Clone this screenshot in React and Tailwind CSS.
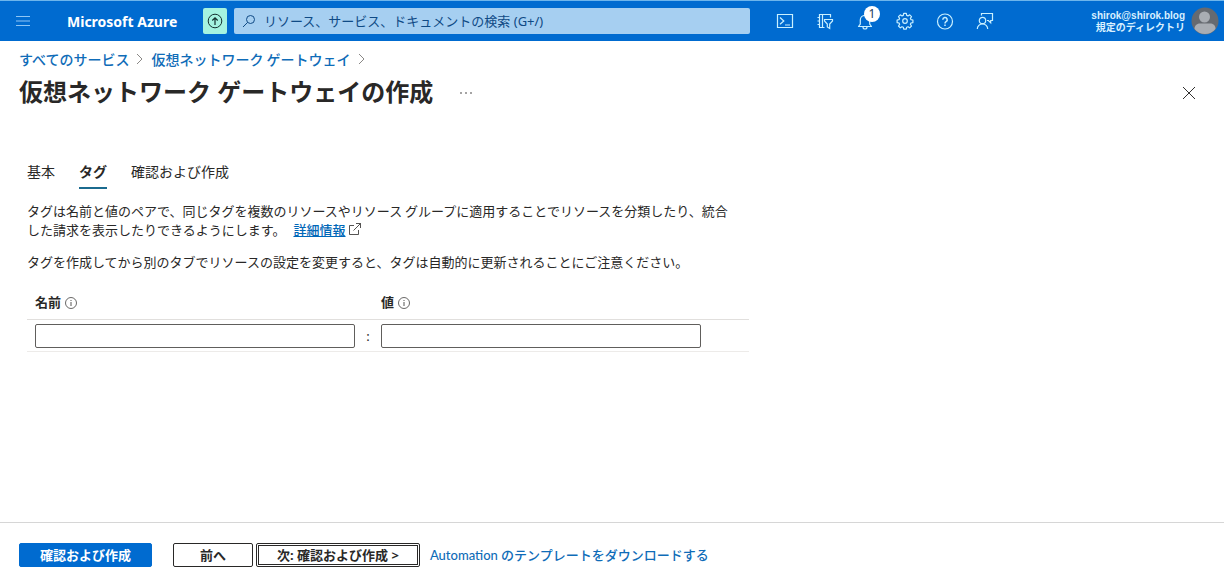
import React, { useState } from 'react';

const ICON_PROPS = {
  width: 20,
  height: 20,
  viewBox: '0 0 20 20',
  fill: 'none',
  stroke: 'currentColor',
  strokeWidth: 1.2,
  'aria-hidden': true
};

const CloudShellIcon = () => (
  <svg {...ICON_PROPS}>
    <path d="M2.5 3.5h15v13h-15z" />
    <path d="M5 6.5l3.8 3.5L5 13.2M10 14h5" />
  </svg>
);

const DirectoryIcon = () => (
  <svg {...ICON_PROPS}>
    <path d="M9.5 16.5h-5v-13h11v3M7.5 3.5v13M2.5 6.5h2M2.5 10h2M2.5 13.5h2" />
    <path d="M9.5 8.5h8V10l-2.8 3v4.5L12.3 16v-3L9.5 10z" />
  </svg>
);

const BellIcon = () => (
  <svg {...ICON_PROPS}>
    <path d="M3.5 15.5h13l-1.8-2.3V9a4.7 4.7 0 0 0-9.4 0v4.2z" strokeLinejoin="round" />
    <path d="M8 16a2 2 0 0 0 4 0" />
  </svg>
);

const GearIcon = () => (
  <svg {...ICON_PROPS}>
    <circle cx="10" cy="10" r="2.3" />
    <path
      d="M8.7 2.4h2.6l.4 2 1.3.5 1.7-1.1 1.8 1.8-1.1 1.7.5 1.3 2 .4v2.6l-2 .4-.5 1.3 1.1 1.7-1.8 1.8-1.7-1.1-1.3.5-.4 2H8.7l-.4-2-1.300-.5-1.700 1.100L3.500 15l1.100-1.700-.5-1.300-2-.4V9l2-.4.5-1.300L3.500 5.600l1.800-1.800L7 4.900l1.300-.5z"
      strokeLinejoin="round"
    />
  </svg>
);

const HelpIcon = () => (
  <svg {...ICON_PROPS}>
    <circle cx="10" cy="10.5" r="7.5" />
    <path d="M7.8 8.7a2.2 2.2 0 1 1 3.3 1.9c-.8.5-1.1.9-1.1 1.9M10 13.5V15" strokeWidth="1.5" />
  </svg>
);

const FeedbackIcon = () => (
  <svg {...ICON_PROPS}>
    <circle cx="7.5" cy="9.5" r="3.2" />
    <path d="M2.3 18a5.2 5.2 0 0 1 10.4 0" />
    <path d="M6.5 4.5v-2h11v7h-1.800v2.300l-2.300-2.300H12" />
  </svg>
);

const InfoIcon = () => (
  <svg width="12" height="12" viewBox="0 0 12 12" fill="none" stroke="currentColor" className="mt-0.5" aria-hidden="true">
    <circle cx="6" cy="6" r="5.5" strokeWidth="0.7" />
    <path d="M6 5v4M6 3v1" strokeWidth="0.8" />
  </svg>
);

const ChevronIcon = () => (
  <svg width="6" height="12" viewBox="0 0 6 12" fill="none" stroke="#8a8886" aria-hidden="true">
    <path d="M0 1l5 5-5 5" />
  </svg>
);

const TOOLBAR = [
  { label: 'Cloud Shell', Icon: CloudShellIcon },
  { label: 'ディレクトリとサブスクリプション', Icon: DirectoryIcon },
  { label: '通知', Icon: BellIcon, badge: 1 },
  { label: '設定', Icon: GearIcon },
  { label: 'ヘルプ', Icon: HelpIcon },
  { label: 'フィードバック', Icon: FeedbackIcon }
];

const TABS = ['基本', 'タグ', '確認および作成'];

function TopBar() {
  return (
    <header className="flex items-center border-t border-[#6db5ec] bg-[#006bd0] h-[41px] text-white shrink-0">
      <button type="button" aria-label="メニュー" className="ml-4 w-[14px] text-[#8fc6f5]">
        <svg width="14" height="12" viewBox="0 0 14 12" stroke="currentColor" strokeWidth="1.2" aria-hidden="true">
          <path d="M0 1.5h14M0 6h14M0 10.5h14" />
        </svg>
      </button>
      <a href="#" className="ml-[37px] w-[136px] text-sm font-bold whitespace-nowrap pt-0.5">
        Microsoft Azure
      </a>
      <button
        type="button"
        aria-label="アップグレード"
        className="flex items-center justify-center w-6 h-[26px] rounded-xs bg-[#a5f3e0] text-[#14302f]"
      >
        <svg width="16" height="16" viewBox="0 0 16 16" fill="none" stroke="currentColor" aria-hidden="true">
          <circle cx="8" cy="8" r="6.8" />
          <path d="M8 12V4.8M5.3 7.5L8 4.8l2.7 2.7" strokeWidth="1.2" />
        </svg>
      </button>
      <label className="flex flex-1 items-center ml-[7px] h-[26px] px-2 rounded-xs bg-[#a6cff1] text-[#0f4a85]">
        <svg width="14" height="14" viewBox="0 0 14 14" fill="none" stroke="currentColor" aria-hidden="true">
          <circle cx="8.5" cy="5.5" r="4" />
          <path d="M5.6 8.4L1 13" />
        </svg>
        <input
          type="search"
          aria-label="検索"
          placeholder="リソース、サービス、ドキュメントの検索 (G+/)"
          className="flex-1 ml-2 text-[13px] leading-5 outline-none placeholder:text-[#0f4a85]"
        />
      </label>
      <nav className="flex ml-[15px]">
        {TOOLBAR.map(({ label, Icon, badge }) => (
          <button key={label} type="button" aria-label={label} className="relative flex justify-center w-10 text-[#c9f0ff]">
            <Icon />
            {badge && (
              <span className="absolute -top-[5px] left-[19px] size-4 rounded-full bg-white text-[#1b3a5c] text-xs leading-4 text-center">
                {badge}
              </span>
            )}
          </button>
        ))}
      </nav>
      <button type="button" className="flex items-center justify-end gap-1.5 w-[219px] pr-[5px]">
        <span className="flex flex-col pt-0.5 text-right text-[10px] leading-3 font-bold font-['Liberation_Sans','Noto_Sans_CJK_JP',sans-serif] text-[#d8f0ff]">
          <span>shirok@shirok.blog</span>
          <span>規定のディレクトリ</span>
        </span>
        <svg width="28" height="28" viewBox="0 0 28 28" aria-hidden="true">
          <circle cx="14" cy="14" r="13.5" fill="#666a70" />
          <circle cx="13.5" cy="10" r="5.5" fill="#a9adb3" />
          <path d="M3.5 22c0-4 3-5.5 5.5-5.5h10c3 0 5.5 1.5 5.5 5.5a13.5 13.5 0 0 1-21 0z" fill="#a9adb3" />
        </svg>
      </button>
    </header>
  );
}

/* パンくずリストとページタイトル */
function PageHeader() {
  return (
    <div className="px-[19px]">
      <nav className="flex items-center gap-2 pt-2 text-sm font-medium text-[#0f6cb8] font-['Noto_Sans_CJK_JP',sans-serif]">
        <a href="#">すべてのサービス</a>
        <ChevronIcon />
        <a href="#">仮想ネットワーク ゲートウェイ</a>
        <ChevronIcon />
      </nav>
      <div className="flex items-center pt-[3px] pr-[9px]">
        <h1 className="pb-0.5 text-2xl leading-10 font-bold text-[#292827]">仮想ネットワーク ゲートウェイの作成</h1>
        <button type="button" aria-label="その他" className="ml-[26px] text-[#323130]">
          <svg width="14" height="4" viewBox="0 0 14 4" fill="currentColor" aria-hidden="true">
            <circle cx="2" cy="2" r="0.8" />
            <circle cx="7" cy="2" r="0.8" />
            <circle cx="12" cy="2" r="0.8" />
          </svg>
        </button>
        <button type="button" aria-label="閉じる" className="ml-auto text-[#323130]">
          <svg width="14" height="14" viewBox="0 0 14 14" stroke="currentColor" aria-hidden="true">
            <path d="M1 1l12 12M13 1L1 13" />
          </svg>
        </button>
      </div>
    </div>
  );
}

function TagTable() {
  const [tagName, setTagName] = useState('');
  const [tagValue, setTagValue] = useState('');

  return (
    <table className="mt-[19px] w-full max-w-[722px] border-collapse text-[13px] leading-5">
      <thead>
        <tr className="border-b border-[#e1dfdd]">
          <th className="w-[328px] pl-2 pt-0.5 pb-[7px] text-left font-bold">
            <span className="flex items-center gap-1">
              <label htmlFor="tag-name">名前</label>
              <InfoIcon />
            </span>
          </th>
          <th className="w-[26px]" />
          <th className="pt-0.5 pb-[7px] text-left font-bold">
            <span className="flex items-center gap-1">
              <label htmlFor="tag-value">値</label>
              <InfoIcon />
            </span>
          </th>
        </tr>
      </thead>
      <tbody>
        <tr className="border-b border-[#edebe9]">
          <td className="pl-2 pt-1 pb-[3px]">
            <input
              id="tag-name"
              type="text"
              value={tagName}
              onChange={(e) => setTagName(e.target.value)}
              className="block w-full h-6 px-2 border border-[#605e5c] rounded-xs"
            />
          </td>
          <td className="text-center">:</td>
          <td className="pt-1 pb-[3px] pr-12">
            <input
              id="tag-value"
              type="text"
              value={tagValue}
              onChange={(e) => setTagValue(e.target.value)}
              className="block w-full h-6 px-2 border border-[#605e5c] rounded-xs"
            />
          </td>
        </tr>
      </tbody>
    </table>
  );
}

export default function App() {
  const [tab, setTab] = useState('タグ');

  return (
    <div className="flex flex-col min-h-screen bg-white text-[#292827] font-['Noto_Sans','Noto_Sans_CJK_JP',sans-serif]">
      <TopBar />
      <PageHeader />

      <main className="flex-1 px-[27px] pt-12">
        <div role="tablist" className="flex gap-6 text-sm">
          {TABS.map((name) => (
            <button
              key={name}
              type="button"
              role="tab"
              aria-selected={tab === name}
              onClick={() => setTab(name)}
              className={
                tab === name
                  ? 'pb-[5px] border-b-2 border-[#1b6b8f] font-bold'
                  : 'pb-[5px] border-b-2 border-transparent'
              }
            >
              {name}
            </button>
          ))}
        </div>

        <p className="mt-3 max-w-[708px] text-[13px] leading-[19px] font-['Noto_Sans_CJK_JP',sans-serif]">
          タグは名前と値のペアで、同じタグを複数のリソースやリソース グループに適用することでリソースを分類したり、統合した請求を表示したりできるようにします。
          <a href="#" className="ml-2 font-medium text-[#0067b8] underline">詳細情報</a>
          <svg width="12" height="12" viewBox="0 0 12 12" fill="none" stroke="currentColor" className="inline align-baseline ml-1" aria-hidden="true">
            <path d="M5 2.5H.5v9h9V7M7 .5h4.5V5M11.5.5l-7 7" strokeWidth="0.8" />
          </svg>
        </p>
        <p className="mt-[13px] text-[13px] leading-[19px] font-['Noto_Sans_CJK_JP',sans-serif]">
          タグを作成してから別のタブでリソースの設定を変更すると、タグは自動的に更新されることにご注意ください。
        </p>

        <TagTable />
      </main>

      <footer className="flex items-center px-[19px] pt-5 pb-[18px] border-t border-[#d6d6d6] text-[13px] leading-[22px]">
        <button type="button" className="px-5 border border-[#006bd0] rounded-xs bg-[#006bd0] text-white font-bold">
          確認および作成
        </button>
        <button type="button" className="ml-[21px] w-20 border border-[#292827] rounded-xs font-bold">
          前へ
        </button>
        <button type="button" className="ml-[3px] p-px border border-[#292827] rounded-xs font-bold">
          <span className="block px-[18px] leading-[18px] border border-[#292827]">次: 確認および作成 &gt;</span>
        </button>
        <a href="#" className="ml-[10px] font-medium text-[#0f6cb8] font-['Lato','Noto_Sans_CJK_JP',sans-serif]">
          Automation のテンプレートをダウンロードする
        </a>
      </footer>
    </div>
  );
}
